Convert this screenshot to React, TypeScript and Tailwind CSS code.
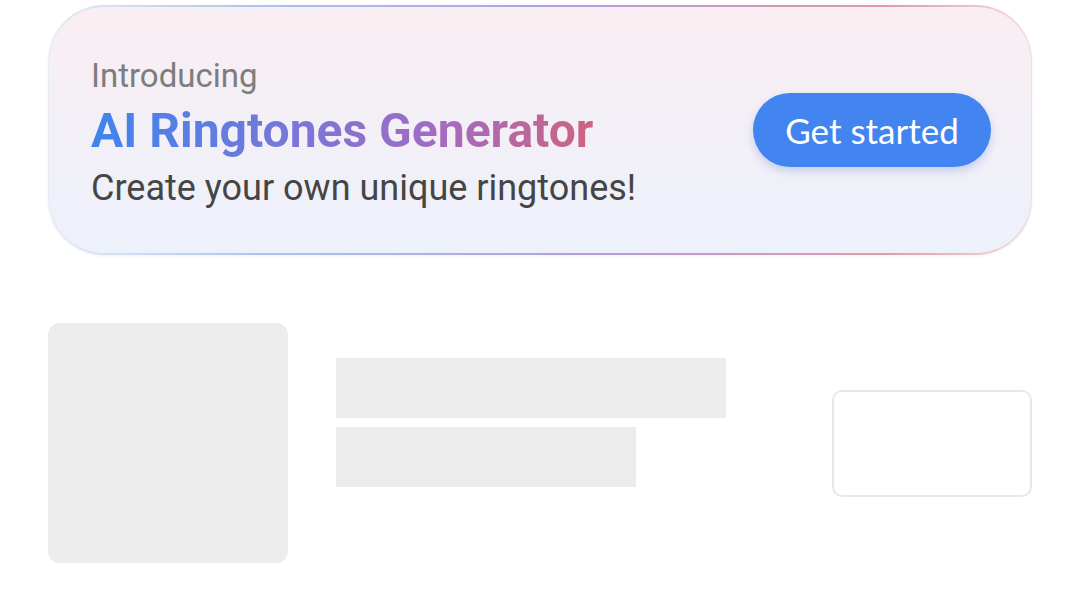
export default function App() {
  return (
    <div className="min-h-[607px] w-[1080px] bg-white font-['Roboto',sans-serif]">
      {/* banner */}
      <div className="px-[48px] pt-[5px]">
        <div className="rounded-[56px] bg-[linear-gradient(to_right,#e6ebf5,#a9c3ef_22%,#b39ddb_55%,#e39aa6_85%,#efdde1)] px-[1px] py-[2px] shadow-[0_1px_3px_rgba(0,0,0,0.06)]">
          <div className="flex h-[246px] justify-between rounded-[55px] bg-[linear-gradient(to_bottom,#f9eef2,#edf1fb)] pl-[42px] pr-[40px]">
            <div className="flex flex-col pt-[49px]">
              <div className="text-[33px] leading-[40px] text-[#7d7d7d]">Introducing</div>
              <div className="mt-[7px] bg-[linear-gradient(to_right,#3d85ee,#7d75d6_40%,#a46bbf_65%,#da616c)] bg-clip-text text-[48px] font-bold leading-[56px] text-transparent">
                AI Ringtones Generator
              </div>
              <div className="mt-[7px] text-[36px] leading-[44px] text-[#454545]">Create your own unique ringtones!</div>
            </div>
            <button className="flex h-[74px] w-[238px] items-center justify-center self-center rounded-full bg-[#4285f0] font-['Lato',sans-serif] text-[35px] text-white shadow-[0_4px_8px_rgba(66,100,200,0.25)]">
              Get started
            </button>
          </div>
        </div>
      </div>

      {/* skeleton row */}
      <div className="mt-[68px] flex items-center px-[48px]">
        <div className="h-[240px] w-[240px] shrink-0 rounded-[12px] bg-[#ececec]" />
        <div className="ml-[48px] flex flex-1 flex-col gap-[9px] self-start pt-[35px]">
          <div className="h-[60px] w-[390px] bg-[#ececec]" />
          <div className="h-[60px] w-[300px] bg-[#ececec]" />
        </div>
        <div className="h-[107px] w-[200px] shrink-0 rounded-[10px] border-2 border-[#e8e8e8]" />
      </div>
    </div>
  );
}
